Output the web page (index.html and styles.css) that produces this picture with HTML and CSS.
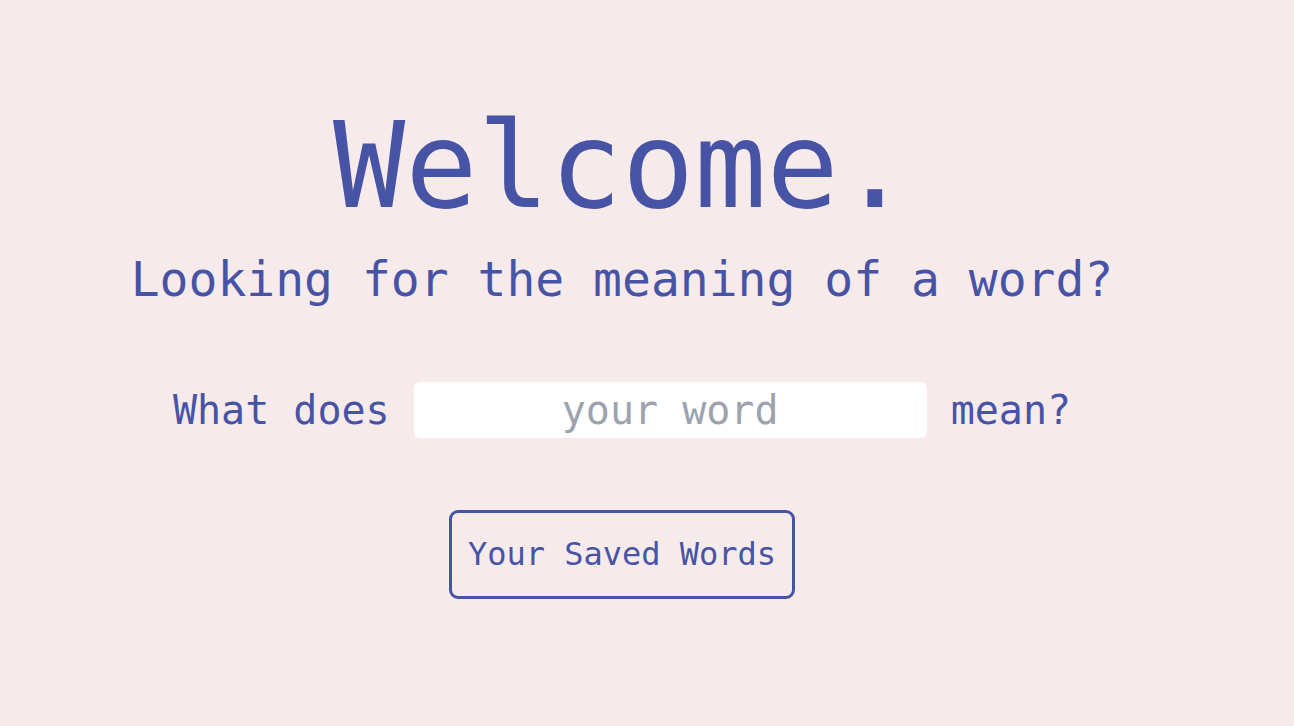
FILE: index.html
```html
<!DOCTYPE html>
<html lang="en">
<head>
<meta charset="utf-8">
<title>Welcome</title>
<link rel="stylesheet" href="styles.css">
</head>
<body>
<main class="page">
  <h1 class="title">Welcome.</h1>
  <h2 class="subtitle">Looking for the meaning of a word?</h2>
  <form class="ask">
    <label class="ask-label" for="word">What does</label>
    <input class="ask-input" id="word" type="text" placeholder="your word">
    <span class="ask-label">mean?</span>
  </form>
  <button class="saved" type="button">Your Saved Words</button>
</main>
</body>
</html>
```

FILE: styles.css
```css
html, body {
  margin: 0;
  padding: 0;
  background: #f7eaeb;
}

body {
  width: 1294px;
  height: 726px;
  overflow: hidden;
  font-family: "DejaVu Sans Mono", "Liberation Mono", monospace;
  color: #4754a6;
}

.page {
  width: 1244px;
  display: flex;
  flex-direction: column;
  align-items: center;
  padding-top: 106px;
}

.title {
  margin: 0;
  font-size: 120px;
  line-height: 1;
  font-weight: normal;
}

.subtitle {
  margin: 29px 0 0;
  font-size: 48px;
  line-height: 1;
  font-weight: normal;
}

.ask {
  margin: 79px 0 0;
  display: flex;
  align-items: center;
  gap: 24px;
}

.ask-label {
  font-size: 40px;
  line-height: 1;
}

.ask-input {
  width: 513px;
  height: 56px;
  box-sizing: border-box;
  border: none;
  border-radius: 6px;
  background: #ffffff;
  font-family: inherit;
  font-size: 40px;
  color: #4754a6;
  text-align: center;
  padding: 0 10px;
  outline: none;
}

.ask-input::placeholder {
  color: #9ca3af;
}

.saved {
  margin-top: 72px;
  font-family: inherit;
  font-size: 32px;
  line-height: 1;
  color: #4754a6;
  background: transparent;
  border: 3px solid #4754a6;
  border-radius: 9px;
  padding: 25px 16px 26px;
  cursor: pointer;
}
```
